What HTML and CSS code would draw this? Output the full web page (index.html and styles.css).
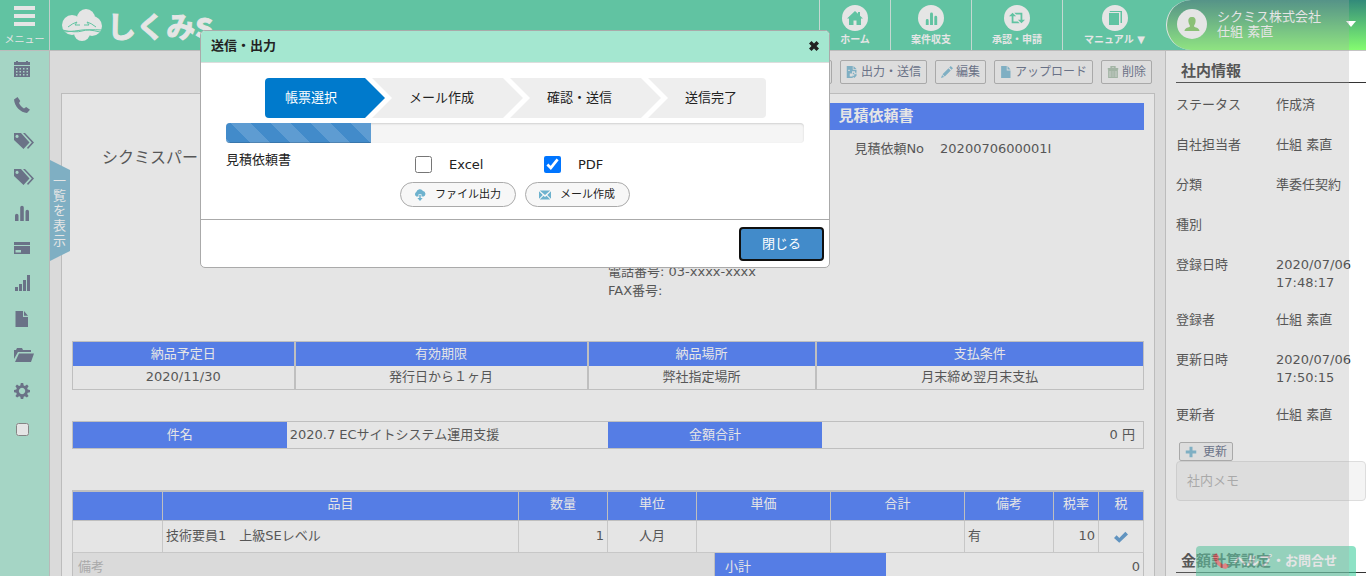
FILE: index.html
```html
<!DOCTYPE html>
<html lang="ja">
<head>
<meta charset="utf-8">
<title>見積依頼書</title>
<link rel="stylesheet" href="styles.css">
</head>
<body>
<svg class="defs" aria-hidden="true">
  <symbol id="bars" viewBox="0 0 16 16"><path d="M1 10.500a1.500 1.500 0 0 1 3.500 0V16H1zM6.200 2.500a1.700 1.700 0 0 1 3.600 0V16H6.200zM11.500 6.500a1.700 1.700 0 0 1 3.500 0V16h-3.500z"/></symbol>
  <symbol id="file" viewBox="0 0 16 16"><path d="M1.500 0H9v6h5v10H1.500zM10 0l4 4.800h-4z"/></symbol>
  <symbol id="tags" viewBox="0 0 20 16"><path fill-rule="evenodd" d="M0 0h7l8.500 9.500-6 6.500L0 7zM3 1.800a1.600 1.600 0 1 0 .1 0zM9 0h2l9 9.500-6 6.500-1-1.200 4.800-5.200z"/></symbol>
  <symbol id="phone" viewBox="0 0 16 16"><path d="M3.500 0 0 2.500C.5 9.500 6.500 15.500 13 16l3-3.200-3.800-2.800-2.200 1.500C7.500 10 6 8 5 6l1.300-2z"/></symbol>
</svg>

<header class="top">
  <button class="menu-btn" type="button">
    <span class="burger"></span>
    <span>メニュー</span>
  </button>
  <a class="brand" href="#">
    <svg class="cloud" viewBox="0 0 40 32" aria-hidden="true">
      <circle cx="24" cy="9" r="9"/>
      <circle cx="10" cy="16" r="10"/>
      <circle cx="30" cy="17" r="10"/>
      <circle cx="20" cy="24" r="8"/>
      <path class="line" d="M0 21q14 3 20 1t20-1M2 23q12-1 18-2t18 2M6 18q5-4 9-5l-2 3h5M34 18q-5-4-9-5l2 3h-5"/>
    </svg>
    <span class="kana">しくみ<span class="latin">s</span></span>
  </a>
  <nav class="nav">
    <a class="home" href="#"><span class="disc"><svg viewBox="0 0 16 16"><path d="M8 1 0 8.500h2V15h4.500v-4.500h3V15H14V8.500h2L13 5.700V2h-2v1.800z"/></svg></span>ホーム</a>
    <a class="income" href="#"><span class="disc"><svg class="small"><use href="#bars"/></svg></span>案件収支</a>
    <a class="approve" href="#"><span class="disc"><svg viewBox="0 0 18 16"><path d="M4 2 0 6h3v8h9l-2-2H5V6h3zM14 14l4-4h-3V2H6l2 2h5v6h-3z"/></svg></span>承認・申請</a>
    <a class="manual" href="#"><span class="disc"><svg viewBox="0 0 16 16"><path d="M2 3h10v12H2zM3 1h12v12h-1.500V2H2.500z"/></svg></span>マニュアル ▼</a>
  </nav>
  <button class="user" type="button">
    <span class="avatar"><svg viewBox="0 0 16 16"><path d="M8 1c3 0 4 2 3.500 5C11 9 10 9 10 10.500c1 1 5 1 5.500 4.500H.5C1 11.500 5 11.500 6 10.500 6 9 5 9 4.500 6 4 3 5 1 8 1z"/></svg></span>
    <span class="who">シクミス株式会社<br>仕組 素直</span>
    <span class="caret"></span>
  </button>
</header>

<div class="shell">
  <nav class="side">
    <a href="#" aria-label="カレンダー"><svg viewBox="0 0 16 16"><path fill-rule="evenodd" d="M0 1h2V0h2v1h8V0h2v1h2v3H0zM0 5h16v11H0zM2 7v1.500h1.500V7zm3.500 0v1.500H7V7zM9 7v1.500h1.500V7zm3.500 0v1.500H14V7zM2 10v1.500h1.500V10zm3.500 0v1.500H7V10zM9 10v1.500h1.500V10zm3.500 0v1.500H14V10zM2 13v1.500h1.500V13zm3.500 0v1.500H7V13zM9 13v1.500h1.500V13zm3.500 0v1.500H14V13z"/></svg></a>
    <a href="#" aria-label="電話"><svg><use href="#phone"/></svg></a>
    <a href="#" aria-label="タグ"><svg class="wide"><use href="#tags"/></svg></a>
    <a href="#" aria-label="タグ"><svg class="wide"><use href="#tags"/></svg></a>
    <a href="#" aria-label="収支"><svg><use href="#bars"/></svg></a>
    <a class="short" href="#" aria-label="カード"><svg viewBox="0 0 16 16"><path fill-rule="evenodd" d="M0 2h16v3H0zM0 6h16v8H0zm1.500 4v2.500H7V10z"/></svg></a>
    <a href="#" aria-label="集計"><svg viewBox="0 0 16 16"><path d="M1 12h3v4H1zM5 9h3v7H5zM9 5h3v11H9zM13 0h3v16h-3z"/></svg></a>
    <a href="#" aria-label="書類"><svg><use href="#file"/></svg></a>
    <a href="#" aria-label="フォルダ"><svg class="wide" viewBox="0 0 20 16"><path d="M0 12V3h2l1-2h5l1 2h8v2H4zM5 6.500h15L17 15H1z"/></svg></a>
    <a href="#" aria-label="設定"><svg viewBox="0 0 16 16"><path fill-rule="evenodd" d="M6.800 0h2.400l.5 2.400 1.200.5L13 1.500 14.600 3.200 13.200 5.200l.5 1.300L16 7v2.200l-2.300.5-.5 1.200 1.400 2-1.700 1.700-2-1.300-1.200.5L9.200 16H6.800l-.5-2.200-1.200-.5-2 1.300-1.700-1.700 1.400-2-.5-1.200L0 9.200V7l2.300-.5.5-1.300-1.400-2L3 1.500l2.100 1.400 1.200-.5zM8 4.800a3.200 3.200 0 1 0 .1 0z"/></svg></a>
    <label><input type="checkbox" aria-label="メニュー固定"></label>
  </nav>

  <main class="main">
    <div class="toolbar">
      <button class="tool" type="button" aria-label="その他"></button>
      <button class="tool" type="button"><svg viewBox="0 0 16 16"><path fill-rule="evenodd" d="M1 0h8v5h5v4h-2V7H8v3H5v4h4v2H1zM3 5v1.500h2V5zM10 0l4 4h-4zM9 9h2v2h2v-1h1v3l-3 3-3-3h3v-2H9z"/></svg>出力・送信</button>
      <button class="tool" type="button"><svg viewBox="0 0 16 16"><path d="M13 0l3 3-2 2-3-3zM10 3l3 3-8 8-3-3zM1.500 12l2.700 2.700L0 16z"/></svg>編集</button>
      <button class="tool" type="button"><svg><use href="#file"/></svg>アップロード</button>
      <button class="tool" type="button"><svg class="trash" viewBox="0 0 16 16"><path d="M5.500 3V1h5v2M1 3.500h14M2.500 5.500v10h11v-10zM5.500 6v9M8 6v9M10.500 6v9"/></svg>削除</button>
    </div>

    <article class="sheet">
      <section class="intro">
        <p class="partner">シクミスパー</p>
        <div class="issuer">
          <h1>見積依頼書</h1>
          <p class="number"><span>見積依頼No</span><span>2020070600001I</span></p>
          <p class="contact">電話番号: 03-xxxx-xxxx<br>FAX番号:</p>
        </div>
      </section>

      <table class="terms">
        <colgroup><col class="t1"><col class="t2"><col class="t3"><col class="t4"></colgroup>
        <thead><tr><th>納品予定日</th><th>有効期限</th><th>納品場所</th><th>支払条件</th></tr></thead>
        <tbody><tr><td>2020/11/30</td><td>発行日から１ヶ月</td><td>弊社指定場所</td><td>月末締め翌月末支払</td></tr></tbody>
      </table>

      <table class="subject">
        <colgroup><col class="s1"><col class="s2"><col class="s1"><col class="s2"></colgroup>
        <tbody><tr><th>件名</th><td>2020.7 ECサイトシステム運用支援</td><th>金額合計</th><td class="sum">0 円</td></tr></tbody>
      </table>

      <table class="items">
        <colgroup><col class="c1"><col class="c2"><col class="c3"><col class="c3"><col class="c4"><col class="c4"><col class="c3"><col class="c5"><col class="c5"></colgroup>
        <thead><tr><th></th><th>品目</th><th>数量</th><th>単位</th><th>単価</th><th>合計</th><th>備考</th><th>税率</th><th>税</th></tr></thead>
        <tbody><tr><td></td><td>技術要員1　上級SEレベル</td><td class="num">1</td><td class="mid">人月</td><td></td><td></td><td>有</td><td class="num">10</td><td class="mid"><svg class="tick" viewBox="0 0 16 16"><path d="M0 9l3-3 3 3 7-7 3 3L6 14.500z"/></svg></td></tr></tbody>
      </table>
      <div class="totals">
        <textarea aria-label="備考" placeholder="備考"></textarea>
        <span class="cap">小計</span>
        <span class="val">0</span>
      </div>
    </article>
    <button class="list-tab" type="button"><span>一覧を表示</span></button>
  </main>

  <aside class="info">
    <h2>社内情報</h2>
    <dl>
      <div><dt>ステータス</dt><dd>作成済</dd></div>
      <div><dt>自社担当者</dt><dd>仕組 素直</dd></div>
      <div><dt>分類</dt><dd>準委任契約</dd></div>
      <div><dt>種別</dt><dd></dd></div>
      <div><dt>登録日時</dt><dd>2020/07/06 17:48:17</dd></div>
      <div><dt>登録者</dt><dd>仕組 素直</dd></div>
      <div><dt>更新日時</dt><dd>2020/07/06 17:50:15</dd></div>
      <div><dt>更新者</dt><dd>仕組 素直</dd></div>
    </dl>
    <button class="tool update" type="button"><svg viewBox="0 0 16 16"><path d="M6 1h4v5h5v4h-5v5H6v-5H1V6h5z"/></svg>更新</button>
    <textarea class="memo" aria-label="社内メモ" placeholder="社内メモ"></textarea>
    <h2>金額計算設定</h2>
  </aside>
</div>

<a class="help" href="#"><svg><use href="#phone"/></svg>ヘルプ・お問合せ</a>
<div class="overlay"></div>

<section class="dialog" role="dialog" aria-labelledby="dialog-title">
  <header class="dialog-head">
    <h2 id="dialog-title">送信・出力</h2>
    <button type="button" aria-label="閉じる"><svg viewBox="0 0 16 16"><path d="M4 0l4 4 4-4 4 4-4 4 4 4-4 4-4-4-4 4-4-4 4-4-4-4z"/></svg></button>
  </header>
  <div class="dialog-body">
    <ol class="steps">
      <li class="first">帳票選択</li>
      <li>メール作成</li>
      <li>確認・送信</li>
      <li class="last">送信完了</li>
    </ol>
    <div class="progress"><div class="bar" style="width:25%"></div></div>
    <div class="choice">
      <span class="doc">見積依頼書</span>
      <div class="options">
        <div class="formats">
          <label><input type="checkbox">Excel</label>
          <label><input type="checkbox" checked>PDF</label>
        </div>
        <div class="actions">
          <button type="button"><svg viewBox="0 0 16 16"><path d="M3 10a3.500 3.500 0 0 1 0-6 5 5 0 0 1 9-1.500 4 4 0 0 1 1 7.500h-3V7H6v3zM7 8h2v4h2.500L8 16l-3.500-4H7z"/></svg>ファイル出力</button>
          <button type="button"><svg viewBox="0 0 16 16"><path d="M1 2h14L8 8zM0 3l5 5-5 5zM16 3l-5 5 5 5zM6 9l2 1.500L10 9l5 5H1z"/></svg>メール作成</button>
        </div>
      </div>
    </div>
  </div>
  <footer class="dialog-foot"><button type="button">閉じる</button></footer>
</section>
</body>
</html>
```
FILE: styles.css
```css
* { box-sizing: border-box; }

body {
  margin: 0;
  height: 100vh;
  overflow: hidden;
  position: relative;
  display: flex;
  flex-direction: column;
  background: #fff;
  color: #333;
  font: 13px/18px "DejaVu Sans", "Noto Sans CJK JP", sans-serif;
}

h1, h2, p, dl, dd, ol { margin: 0; padding: 0; }
a { color: inherit; text-decoration: none; }
button, input, textarea { font: inherit; color: inherit; margin: 0; }
button { cursor: pointer; }
svg { width: 16px; height: 16px; fill: currentColor; flex: none; }
.defs { position: absolute; width: 0; height: 0; }

/* header */
.top {
  display: flex;
  flex: none;
  height: 51px;
  background: #43cf9f;
  border-bottom: 1px solid #c4c4c4;
  color: #fff;
}
.menu-btn {
  display: flex;
  flex-direction: column;
  align-items: center;
  width: 50px;
  padding: 6px 0 0;
  border: 0;
  border-right: 1px solid #c9e0d8;
  background: none;
  font-size: 10px;
}
.burger {
  width: 21px;
  height: 20px;
  margin-bottom: 5px;
  border-top: 4px solid #fff;
  border-bottom: 4px solid #fff;
  background: linear-gradient(#fff, #fff) 0 4px / 100% 4px no-repeat;
}
.brand {
  display: flex;
  align-items: center;
  gap: 5px;
  flex: 1;
  padding-left: 12px;
}
.kana {
  font: 700 29px/48px "Noto Sans CJK JP", sans-serif;
  -webkit-text-stroke: 1px #fff;
}
.latin { font-size: 36px; line-height: 1; }
.cloud { width: 40px; height: 32px; }
.cloud .line { fill: none; stroke: #43cf9f; stroke-width: 1; }
.nav { display: flex; }
.nav a {
  display: flex;
  flex-direction: column;
  align-items: center;
  padding-top: 5px;
  border-left: 1px solid #d0ede3;
  font-size: 10px;
  font-weight: 700;
}
.home { width: 71px; }
.income { width: 81px; }
.approve { width: 91px; }
.manual { width: 104px; }
.disc {
  display: grid;
  place-items: center;
  width: 26px;
  height: 26px;
  border-radius: 50%;
  background: #fff;
  color: #43cf9f;
}
.disc .small { width: 13px; height: 13px; }
.user {
  display: flex;
  align-items: center;
  width: 200px;
  padding: 0 10px 2px;
  border: 0;
  border-left: 1px solid #fff;
  border-radius: 25px 0 0 25px;
  background: linear-gradient(#328a7a, #84fc70);
  text-align: left;
  line-height: 15px;
}
.avatar {
  display: grid;
  place-items: center;
  width: 30px;
  height: 30px;
  margin-right: 10px;
  border-radius: 50%;
  background: #fff;
  color: #7fca60;
}
.who { flex: 1; }
.caret { border: 5px solid transparent; border-top: 6px solid #fff; border-bottom: 0; }

/* columns */
.shell { display: flex; flex: 1; min-height: 0; }
.side {
  display: flex;
  flex-direction: column;
  width: 50px;
  flex: none;
  border-right: 1px solid #c0c0c0;
  background: #a4e9d1;
  color: #505b79;
}
.side a, .side label { display: flex; align-items: center; height: 36px; padding-left: 14px; }
.side .short { height: 34px; }
.side label { height: 40px; }
.side .wide { width: 20px; }
.side input { margin-left: 2px; }
.main {
  position: relative;
  display: flex;
  flex-direction: column;
  flex: 1;
  min-width: 0;
  border-right: 1px solid #c4c4c4;
  background: #efefef;
}

/* toolbar */
.toolbar { display: flex; justify-content: flex-end; gap: 8px; padding: 9px 13px 9px 0; }
.tool {
  display: flex;
  align-items: center;
  gap: 3px;
  height: 24px;
  padding: 0 5px;
  border: 1px solid #aaa;
  border-radius: 2px;
  background: #f4f4f4;
  color: #505b79;
  font-size: 12px;
  white-space: nowrap;
}
.tool:empty { width: 48px; }
.tool svg { width: 12px; height: 12px; color: #6db2ce; }
.tool .trash { fill: none; stroke: #9fb9a2; stroke-width: 2; }

/* document sheet */
.sheet {
  flex: 1;
  min-height: 0;
  overflow: hidden;
  margin: 0 10px 0 11px;
  padding: 9px 10px 0;
  border: 1px solid #c4c4c4;
  border-bottom: 0;
  background: #fff;
}
.intro { display: grid; grid-template-columns: 1fr 1fr; padding-bottom: 41px; }
.partner { padding: 45px 0 0 30px; font-size: 16px; line-height: 20px; }
.issuer h1 {
  margin-left: 40%;
  padding: 0 0 1px 16px;
  background: #326aff;
  color: #fff;
  font-size: 15px;
  line-height: 26px;
}
.number { display: flex; gap: 16px; margin-left: 40%; padding: 10px 0 0 32px; }
.contact { padding-top: 104px; line-height: 19px; }

table { width: 100%; table-layout: fixed; border-collapse: collapse; }
th { background: #326aff; color: #fff; font-weight: 400; }
.terms th, .terms td { height: 24px; padding: 0; text-align: center; }
.terms th, .terms td { border-left: 2px solid #c9c9c9; }
.terms th:first-child, .terms td:first-child { border-left: 1px solid #c9c9c9; }
.terms { margin-bottom: 31px; border: 1px solid #c9c9c9; }
.t1 { width: 222px; }
.t2 { width: 293px; }
.t3 { width: 228px; }
.subject { margin-bottom: 41px; border: 1px solid #c9c9c9; }
.subject th, .subject td { height: 27px; padding: 0 3px; }
.subject .sum { padding-right: 8px; text-align: right; }
.s1 { width: 20%; }
.s2 { width: 30%; }
.items { border: 1px solid #c9c9c9; border-top: 2px solid #c9c9c9; }
.items th, .items td { padding: 0 3px; border: 1px solid #d4d4d4; }
.items th { height: 29px; padding-bottom: 4px; border-color: #c9c9c9; }
.items td { height: 32px; }
.items .num { text-align: right; }
.items .mid { text-align: center; }
.c1 { width: 90px; }
.c3 { width: 89px; }
.c4 { width: 134px; }
.c5 { width: 45px; }
.tick { width: 14px; height: 14px; color: #428bca; vertical-align: middle; }
.totals { display: grid; grid-template-columns: 60% 16% 1fr; border: 1px solid #c9c9c9; border-top: 0; line-height: 27px; }
.totals textarea {
  height: 60px;
  padding: 0 5px;
  border: 0;
  border-right: 1px solid #c9c9c9;
  background: #efefef;
  resize: none;
}
.totals .cap { padding-left: 10px; background: #326aff; color: #fff; }
.totals .val { padding-right: 3px; text-align: right; }
textarea::placeholder { color: #aaa; opacity: 1; }

.list-tab {
  position: absolute;
  top: 109px;
  left: 0;
  width: 20px;
  height: 101px;
  padding: 0 3px;
  border: 0;
  background: #6db2ce;
  color: #fff;
  line-height: 15px;
  clip-path: polygon(0 0, 100% 10%, 100% 90%, 0 100%);
}
.list-tab span { display: block; width: 13px; word-break: break-all; }

/* internal information */
.info { width: 200px; flex: none; padding-left: 10px; }
.info h2 {
  padding: 9px 5px 0;
  border-bottom: 1px solid #333;
  font-size: 15px;
  font-weight: 700;
  line-height: 22px;
}
.info dl { padding-top: 3px; }
.info dl div { display: flex; min-height: 40px; padding: 10px 0 9px; }
.info dt { width: 100px; flex: none; }
.update { height: 19px; margin: 6px 0 0 3px; gap: 6px; }
.memo {
  display: block;
  width: 100%;
  height: 40px;
  padding: 10px;
  border: 1px solid #ddd;
  border-radius: 4px;
  background: #f4f4f4;
  resize: none;
}
.memo + h2 { padding-top: 49px; }
.help {
  position: absolute;
  right: 10px;
  bottom: 0;
  display: flex;
  align-items: center;
  justify-content: flex-end;
  gap: 4px;
  width: 160px;
  height: 30px;
  padding-right: 19px;
  border-radius: 4px 4px 0 0;
  background: #43cf9f;
  color: #fff;
  font-weight: 700;
  opacity: .6;
}
.help svg { color: #f02020; }
.overlay { position: absolute; inset: 0 17px 0 0; background: #aaa; opacity: .3; }

/* dialog */
.dialog {
  position: absolute;
  top: 30px;
  left: 200px;
  width: 630px;
  overflow: hidden;
  border: 1px solid #aaa;
  border-radius: 5px;
  background: #fff;
  color: #222;
}
.dialog-head {
  display: flex;
  align-items: center;
  justify-content: space-between;
  height: 32px;
  padding: 0 10px 2px;
  border-bottom: 1px solid #ddd;
  background: #a4e7d0;
}
.dialog-head h2 { font-size: 13px; font-weight: 700; }
.dialog-head button { display: flex; padding: 0; border: 0; background: none; }
.dialog-head svg { width: 10px; height: 10px; }
.dialog-body { padding: 15px 25px 12px; border-bottom: 1px solid #aaa; }
.steps { display: flex; padding: 0 38px 0 39px; list-style: none; line-height: 40px; }
.steps li {
  width: 151px;
  height: 40px;
  padding-left: 37px;
  background: #eee;
  clip-path: polygon(0 0, 131px 0, 100% 50%, 131px 100%, 0 100%, 20px 50%);
}
.steps li + li { margin-left: -13px; }
.steps .first {
  width: 120px;
  padding-left: 20px;
  border-radius: 4px 0 0 4px;
  background: #007acc;
  color: #fff;
  clip-path: polygon(0 0, 100px 0, 100% 50%, 100px 100%, 0 100%);
}
.steps .last {
  width: 118px;
  border-radius: 0 4px 4px 0;
  clip-path: polygon(0 0, 100% 0, 100% 100%, 0 100%, 20px 50%);
}
.progress {
  height: 20px;
  margin-top: 5px;
  overflow: hidden;
  border-radius: 4px;
  background: #f5f5f5;
  box-shadow: inset 0 1px 2px rgba(0, 0, 0, .15);
}
.bar {
  height: 100%;
  background: linear-gradient(45deg, rgba(255,255,255,.15) 25%, transparent 25%, transparent 50%, rgba(255,255,255,.15) 50%, rgba(255,255,255,.15) 75%, transparent 75%) 5px 0 / 40px 40px #428bca;
  box-shadow: inset 0 -1px 0 rgba(0, 0, 0, .15);
}
.choice { display: flex; padding-top: 8px; }
.doc { width: 174px; }
.formats { display: flex; padding: 4px 0 8px 15px; }
.formats label { display: flex; align-items: center; width: 129px; height: 19px; }
.formats input { width: 17px; height: 17px; margin-right: 17px; }
.actions { display: flex; gap: 9px; }
.actions button {
  display: flex;
  align-items: center;
  gap: 9px;
  height: 25px;
  padding: 0 14px 0 13px;
  border: 1px solid #aaa;
  border-radius: 13px;
  background: #f7f7f7;
  font-size: 11px;
}
.actions svg { width: 12px; height: 12px; color: #6db2ce; }
.dialog-foot { display: flex; justify-content: flex-end; padding: 7px 5px 6px; }
.dialog-foot button {
  width: 85px;
  height: 34px;
  border: 2px solid #101010;
  border-radius: 4px;
  background: #428bca;
  color: #fff;
}
```
